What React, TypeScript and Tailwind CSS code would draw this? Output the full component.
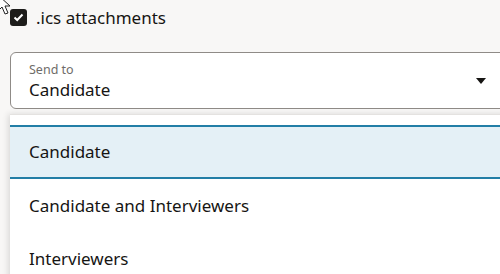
import React from 'react';

const options = ['Candidate', 'Candidate and Interviewers', 'Interviewers'];

const App: React.FC = () => {
  const selected = 'Candidate';

  return (
    <div className="relative h-[274px] w-[500px] overflow-hidden bg-[#f8f7f6] font-['Noto_Sans',sans-serif] text-[#161513]">
      {/* mouse pointer */}
      <svg className="absolute -left-[3px] -top-[6px]" width="18" height="24" viewBox="0 0 18 24">
        <path d="M1 1 L1 17 L5 13 L8 20 L11 19 L8 12 L13 12 Z" fill="#fff" stroke="#222" strokeWidth="1" />
      </svg>

      {/* Checkbox row */}
      <div className="flex items-center gap-[9px] pl-[10px] pt-[8px]">
        <div className="flex h-[17px] w-[17px] items-center justify-center rounded-[3px] bg-[#1d1c1a]">
          <svg width="11" height="9" viewBox="0 0 11 9">
            <path d="M1.5 4.5 L4.2 7 L9.5 1.5" fill="none" stroke="#fff" strokeWidth="2" />
          </svg>
        </div>
        <span className="text-[17px] leading-[19px]">.ics attachments</span>
      </div>

      {/* Select field */}
      <div className="ml-[10px] mt-[25px] flex h-[57px] w-[510px] items-center rounded-[6px] border border-[#8f8b87] bg-white pl-[18px] pr-[33px]">
        <div className="flex flex-1 flex-col">
          <span className="text-[12.5px] leading-[17px] text-[#6f6c69]">Send to</span>
          <span className="text-[17px] leading-[23px]">{selected}</span>
        </div>
        <svg width="10" height="6" viewBox="0 0 10 6" className="mt-[1px]">
          <path d="M0 0 L10 0 L5 6 Z" fill="#161513" />
        </svg>
      </div>

      {/* Dropdown list */}
      <div className="ml-[10px] mt-[5px] w-[510px] border-t border-[#e4e2e0] bg-white pt-[10px] shadow-[-2px_0_6px_rgba(0,0,0,0.12)]">
        {options.map((opt) => (
          <div
            key={opt}
            className={
              opt === selected
                ? 'flex h-[54px] items-center border-y-2 border-[#227ea6] bg-[#e4f0f6] pl-[19px] text-[17px]'
                : 'flex h-[53px] items-center pl-[19px] text-[17px]'
            }
          >
            {opt}
          </div>
        ))}
      </div>
    </div>
  );
};

export default App;
